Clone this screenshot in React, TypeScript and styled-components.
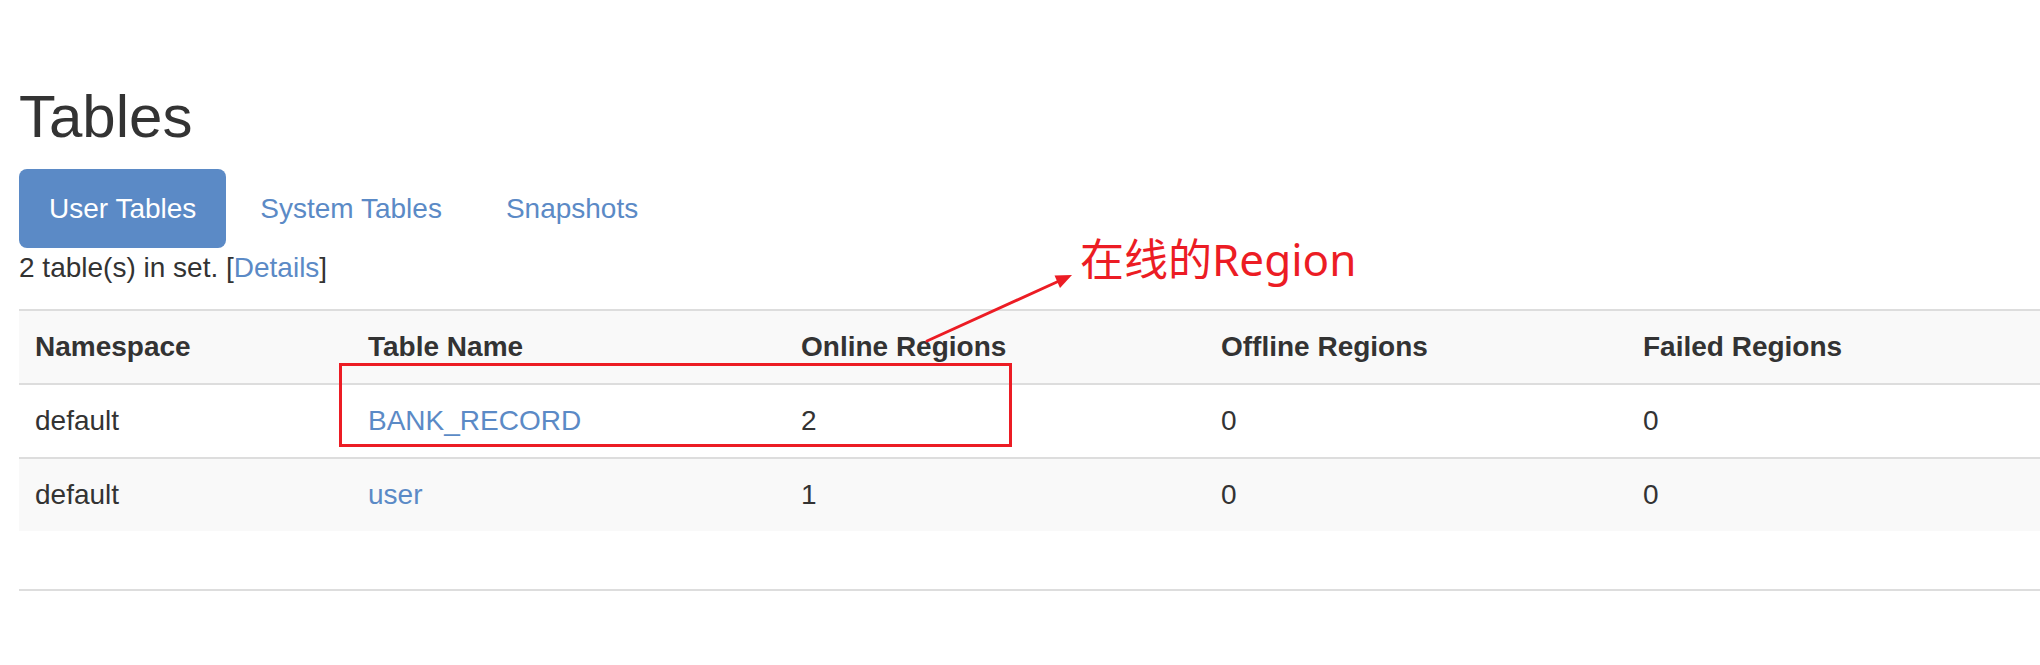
import React from 'react';
import styled, { createGlobalStyle } from 'styled-components';

const GlobalStyle = createGlobalStyle`
  html, body {
    margin: 0;
    padding: 0;
    background: #fff;
    overflow: hidden;
  }
  body {
    font-family: "Liberation Sans", Arial, Helvetica, sans-serif;
    font-size: 28px;
    line-height: 40px;
    color: #333;
  }
`;

const LINK = '#5b8ac6';
const MARK = '#ec1c24';

const Page = styled.section`
  position: relative;
  height: 665px;
  box-sizing: border-box;
  padding: 84px 0 0 19px;
`;

const Heading = styled.h2`
  margin: 0 0 19px;
  font-size: 60px;
  font-weight: 400;
  line-height: 1.1;
  color: #333;
`;

const Pills = styled.ul`
  display: flex;
  gap: 4px;
  margin: 0;
  padding: 0;
  list-style: none;
`;

const Pill = styled.a<{ $active?: boolean }>`
  display: block;
  padding: 20px 30px;
  border-radius: 8px;
  line-height: 39px;
  text-decoration: none;
  cursor: pointer;
  color: ${(p) => (p.$active ? '#fff' : LINK)};
  background: ${(p) => (p.$active ? LINK : 'transparent')};
`;

const Summary = styled.div`
  margin-bottom: 21px;
`;

const Link = styled.a`
  color: ${LINK};
  text-decoration: none;
`;

const Grid = styled.table`
  width: 100%;
  table-layout: fixed;
  border-collapse: separate;
  border-spacing: 0;
`;

const Row = styled.tr<{ $striped?: boolean }>`
  background: ${(p) => (p.$striped ? '#f9f9f9' : '#fff')};
`;

const HeadCell = styled.th`
  padding: 16px;
  border-top: 2px solid #ddd;
  text-align: left;
  font-weight: bold;
  line-height: 40px;
  vertical-align: top;
`;

const Cell = styled.td`
  padding: 16px;
  border-top: 2px solid #ddd;
  line-height: 40px;
  vertical-align: top;
`;

const Rule = styled.hr`
  margin: 58px 0 0;
  border: 0;
  border-top: 2px solid #ddd;
`;

// red call-out drawn over the table
const Frame = styled.div`
  position: absolute;
  left: 339px;
  top: 363px;
  width: 673px;
  height: 84px;
  box-sizing: border-box;
  border: 3px solid ${MARK};
  pointer-events: none;
`;

const Pointer = styled.svg`
  position: absolute;
  left: 900px;
  top: 250px;
  overflow: visible;
  pointer-events: none;
`;

const Label = styled.span`
  position: absolute;
  left: 1080px;
  top: 237px;
  font-family: "Noto Sans", "Noto Sans CJK SC", sans-serif;
  font-size: 44px;
  line-height: 44px;
  color: ${MARK};
  white-space: nowrap;
`;

const columns = [333, 433, 420, 422];

const tables = [
  { ns: 'default', name: 'BANK_RECORD', online: 2, offline: 0, failed: 0 },
  { ns: 'default', name: 'user', online: 1, offline: 0, failed: 0 },
];

const App: React.FC = () => {
  return (
    <>
      <GlobalStyle />
      <Page>
        <Heading>Tables</Heading>
        <Pills>
          <li><Pill $active>User Tables</Pill></li>
          <li><Pill>System Tables</Pill></li>
          <li><Pill>Snapshots</Pill></li>
        </Pills>
        <Summary>
          {tables.length} table(s) in set. [<Link>Details</Link>]
        </Summary>
        <Grid>
          <colgroup>
            {columns.map((w, i) => (
              <col key={i} style={{ width: w }} />
            ))}
            <col />
          </colgroup>
          <tbody>
            <Row $striped>
              <HeadCell>Namespace</HeadCell>
              <HeadCell>Table Name</HeadCell>
              <HeadCell>Online Regions</HeadCell>
              <HeadCell>Offline Regions</HeadCell>
              <HeadCell>Failed Regions</HeadCell>
            </Row>
            {tables.map((t, i) => (
              <Row key={t.name} $striped={i % 2 === 1}>
                <Cell>{t.ns}</Cell>
                <Cell><Link>{t.name}</Link></Cell>
                <Cell>{t.online}</Cell>
                <Cell>{t.offline}</Cell>
                <Cell>{t.failed}</Cell>
              </Row>
            ))}
          </tbody>
        </Grid>
        <Rule />

        <Frame />
        <Pointer width="200" height="110" viewBox="0 0 200 110">
          <line x1="27" y1="91" x2="158" y2="31.5" stroke={MARK} strokeWidth="3" strokeLinecap="round" />
          <polygon points="172,25 160,38 154.5,25.5" fill={MARK} />
        </Pointer>
        <Label>在线的Region</Label>
      </Page>
    </>
  );
};

export default App;
